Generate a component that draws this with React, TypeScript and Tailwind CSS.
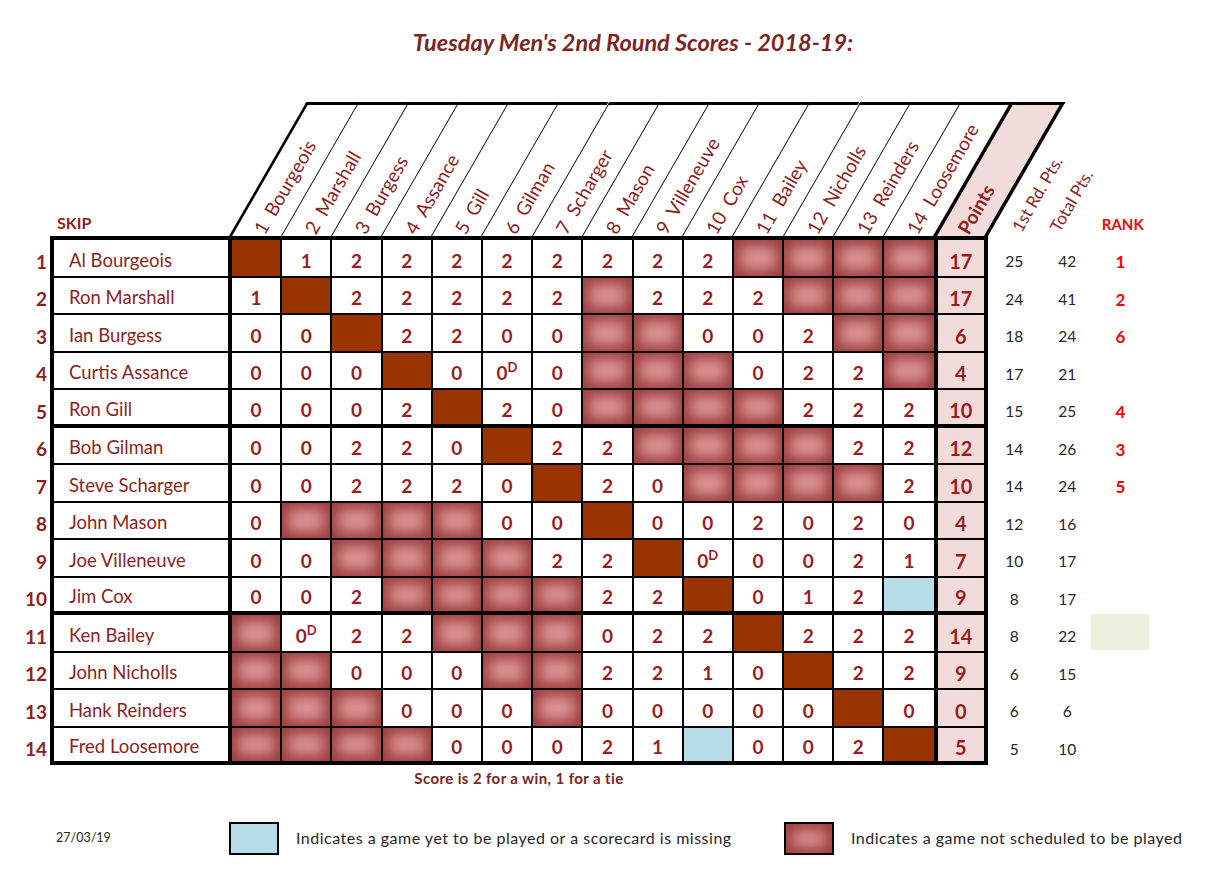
import React from "react";

// X = own game, P = not scheduled, B = yet to be played / missing card
const players = [
  { name: "Al Bourgeois", cells: "X 1 2 2 2 2 2 2 2 2 P P P P", pts: "17", first: "25", total: "42", rank: "1" },
  { name: "Ron Marshall", cells: "1 X 2 2 2 2 2 P 2 2 2 P P P", pts: "17", first: "24", total: "41", rank: "2" },
  { name: "Ian Burgess", cells: "0 0 X 2 2 0 0 P P 0 0 2 P P", pts: "6", first: "18", total: "24", rank: "6" },
  { name: "Curtis Assance", cells: "0 0 0 X 0 0D 0 P P P 0 2 2 P", pts: "4", first: "17", total: "21", rank: "" },
  { name: "Ron Gill", cells: "0 0 0 2 X 2 0 P P P P 2 2 2", pts: "10", first: "15", total: "25", rank: "4" },
  { name: "Bob Gilman", cells: "0 0 2 2 0 X 2 2 P P P P 2 2", pts: "12", first: "14", total: "26", rank: "3" },
  { name: "Steve Scharger", cells: "0 0 2 2 2 0 X 2 0 P P P P 2", pts: "10", first: "14", total: "24", rank: "5" },
  { name: "John Mason", cells: "0 P P P P 0 0 X 0 0 2 0 2 0", pts: "4", first: "12", total: "16", rank: "" },
  { name: "Joe Villeneuve", cells: "0 0 P P P P 2 2 X 0D 0 0 2 1", pts: "7", first: "10", total: "17", rank: "" },
  { name: "Jim Cox", cells: "0 0 2 P P P P 2 2 X 0 1 2 B", pts: "9", first: "8", total: "17", rank: "" },
  { name: "Ken Bailey", cells: "P 0D 2 2 P P P 0 2 2 X 2 2 2", pts: "14", first: "8", total: "22", rank: "", green: true },
  { name: "John Nicholls", cells: "P P 0 0 0 P P 2 2 1 0 X 2 2", pts: "9", first: "6", total: "15", rank: "" },
  { name: "Hank Reinders", cells: "P P P 0 0 0 P 0 0 0 0 0 X 0", pts: "0", first: "6", total: "6", rank: "" },
  { name: "Fred Loosemore", cells: "P P P P 0 0 0 2 1 B 0 0 2 X", pts: "5", first: "5", total: "10", rank: "" },
];

const heads = [
  "1  Bourgeois", "2  Marshall", "3  Burgess", "4  Assance", "5  Gill", "6  Gilman", "7  Scharger",
  "8  Mason", "9  Villeneuve", "10  Cox", "11  Bailey", "12  Nicholls", "13  Reinders", "14  Loosemore",
];

const pillow = "bg-[#dc9494] shadow-[inset_0_0_14px_6px_#9b3c3c]";

function Score({ v }: { v: string }) {
  if (v === "0D") {
    return (
      <span>
        0<sup className="text-[13px] -top-[8px]">D</sup>
      </span>
    );
  }
  return <span>{v}</span>;
}

function Label({ text, bold }: { text: string; bold?: boolean }) {
  return (
    <span
      className={`absolute left-1/2 top-[calc(100%_-_4px)] origin-top-left whitespace-pre leading-none [transform:skewX(30deg)_rotate(-60deg)_translateY(-50%)] ${
        bold ? "font-bold text-[19px]" : "text-[19px]"
      }`}
    >
      {text}
    </span>
  );
}

export default function App() {
  return (
    <div className="w-[1232px] h-[886px] bg-white font-[Lato,sans-serif] text-[#8c1f1f] overflow-hidden">
      {/* title */}
      <div className="h-[102px] pt-[25px] pl-[34px] text-center text-[23.5px] font-bold italic text-[#7b2525]">
        Tuesday Men's 2nd Round Scores - 2018-19:
      </div>

      {/* slanted header */}
      <div className="flex h-[134px]">
        <div className="w-[229px] shrink-0 flex items-end pl-[57px] pb-[1px] text-[16px] font-bold">SKIP</div>
        {heads.map((h, j) => (
          <div
            key={h}
            className={`relative h-full shrink-0 origin-bottom [transform:skewX(-30deg)] border-t-[3px] border-black ${
              j === 0 ? "w-[51.7px] border-l-[3px]" : "w-[50.2px] border-l"
            }`}
          >
            <Label text={h} />
          </div>
        ))}
        <div className="relative h-full w-[54.7px] shrink-0 origin-bottom [transform:skewX(-30deg)] border-t-[3px] border-l-4 border-r-4 border-black bg-[#f2dcdb]">
          <Label text="Points" bold />
        </div>
        <div className="relative h-full w-[180px] shrink-0">
          <span className="absolute left-[28px] top-[calc(100%_-_6px)] origin-top-left whitespace-nowrap leading-none text-[17px] [transform:rotate(-60deg)_translateY(-50%)]">
            1st Rd. Pts.
          </span>
          <span className="absolute left-[66px] top-[calc(100%_-_6px)] origin-top-left whitespace-nowrap leading-none text-[17px] [transform:rotate(-60deg)_translateY(-50%)]">
            Total Pts.
          </span>
          <span className="absolute left-[114px] bottom-[1px] text-[15px] font-bold text-[#ff0000]">RANK</span>
        </div>
      </div>

      {/* rows */}
      {players.map((p, i) => {
        const bb = i === 4 || i === 9 || i === 13 ? "border-b-4" : "border-b-2";
        const bt = i === 0 ? "border-t-4" : "";
        const out = i === 0 ? "pt-[10px]" : "pt-[6px]";
        const cells = p.cells.split(" ");
        return (
          <div key={p.name} className={`flex ${i === 0 ? "h-[41.5px]" : "h-[37.5px]"}`}>
            <div className={`w-[50px] shrink-0 flex items-center justify-end pr-[3px] text-[19px] font-bold ${out}`}>
              {i + 1}
            </div>
            <div className={`w-[182px] shrink-0 flex items-center pl-[15px] pt-[6px] text-[18.5px] border-l-4 border-r-4 border-black ${bb} ${bt}`}>
              {p.name}
            </div>
            {cells.map((c, j) => {
              const w = j === 13 ? "w-[49.4px]" : "w-[50.2px] border-r-2";
              let fill = "";
              if (c === "X") fill = "bg-[#993300]";
              else if (c === "P") fill = pillow;
              else if (c === "B") fill = "bg-[#b7dee8]";
              const txt = c === "X" || c === "P" || c === "B" ? null : <Score v={c} />;
              return (
                <div
                  key={j}
                  className={`${w} shrink-0 flex items-center justify-center pt-[6px] border-black text-[19px] font-bold text-[#9b1c1c] ${bb} ${bt} ${fill}`}
                >
                  {txt}
                </div>
              );
            })}
            <div className={`w-[54px] shrink-0 flex items-center justify-center pt-[6px] bg-[#f2dcdb] border-l-4 border-r-4 border-black text-[20px] font-bold text-[#9b1c1c] ${bb} ${bt}`}>
              {p.pts}
            </div>
            <div className={`w-[53px] shrink-0 flex items-center justify-center text-[15.5px] text-[#262626] ${out}`}>{p.first}</div>
            <div className={`w-[53px] shrink-0 flex items-center justify-center text-[15.5px] text-[#262626] ${out}`}>{p.total}</div>
            <div className={`w-[53px] shrink-0 flex items-center justify-center text-[17px] font-bold text-[#ff0000] ${p.green ? "" : out}`}>
              {p.green ? <div className="w-[58px] h-[36px] shrink-0 -mt-[4px] bg-[#ebf1de]" /> : p.rank}
            </div>
          </div>
        );
      })}

      {/* note */}
      <div className="ml-[50px] w-[938px] mt-[2px] text-center text-[15px] tracking-[0.4px] font-bold text-[#7b2525]">
        Score is 2 for a win, 1 for a tie
      </div>

      {/* legend */}
      <div className="flex items-center h-[33px] mt-[32px] text-[16px] tracking-[0.5px] text-[#262626]">
        <div className="w-[229px] shrink-0 pl-[56px] text-[12.5px] tracking-normal">27/03/19</div>
        <div className="w-[50px] h-[33px] shrink-0 border-2 border-black bg-[#b7dee8]" />
        <div className="w-[505px] shrink-0 pl-[17px]">Indicates a game yet to be played or a scorecard is missing</div>
        <div className={`w-[50px] h-[33px] shrink-0 border-2 border-black ${pillow}`} />
        <div className="pl-[17px]">Indicates a game not scheduled to be played</div>
      </div>
    </div>
  );
}
